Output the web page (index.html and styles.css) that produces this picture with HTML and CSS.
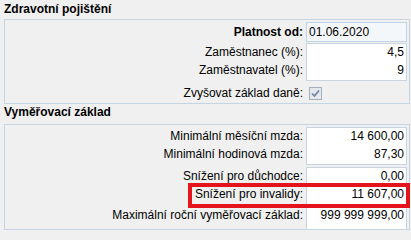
FILE: index.html
```html
<!DOCTYPE html>
<html lang="cs">
<head>
<meta charset="utf-8">
<title>Zdravotní pojištění</title>
<link rel="stylesheet" href="styles.css">
</head>
<body>
<div class="page">
  <section class="group g1">
    <div class="title">Zdravotní pojištění</div>
    <div class="box">
      <div class="row r-date">
        <span class="label strong">Platnost od:</span>
        <span class="val date">01.06.2020</span>
      </div>
      <div class="cluster">
        <div class="row first">
          <span class="label">Zaměstnanec (%):</span>
          <span class="val">4,5</span>
        </div>
        <div class="row last">
          <span class="label">Zaměstnavatel (%):</span>
          <span class="val">9</span>
        </div>
      </div>
      <div class="row r-check">
        <span class="label">Zvyšovat základ daně:</span>
        <span class="cell-check">
          <span class="check">
            <svg width="11" height="11" viewBox="0 0 11 11"><polyline points="2,5.5 4.4,8 9,2.5" fill="none" stroke="#6f84a4" stroke-width="1.7"/></svg>
          </span>
        </span>
      </div>
    </div>
  </section>

  <section class="group g2">
    <div class="title">Vyměřovací základ</div>
    <div class="box box2">
      <div class="cluster">
        <div class="row first">
          <span class="label">Minimální měsíční mzda:</span>
          <span class="val">14 600,00</span>
        </div>
        <div class="row last">
          <span class="label">Minimální hodinová mzda:</span>
          <span class="val">87,30</span>
        </div>
      </div>
      <div class="cluster c-b">
        <div class="row first">
          <span class="label">Snížení pro důchodce:</span>
          <span class="val">0,00</span>
        </div>
        <div class="row mid hl-row">
          <span class="label">Snížení pro invalidy:</span>
          <span class="val">11 607,00</span>
          <span class="highlight"></span>
        </div>
        <div class="row open">
          <span class="label">Maximální roční vyměřovací základ:</span>
          <span class="val">999 999 999,00</span>
        </div>
      </div>
    </div>
  </section>
</div>
</body>
</html>
```

FILE: styles.css
```css
html, body {
  margin: 0;
  padding: 0;
  background: #f0f0f0;
}

body {
  font-family: "Liberation Sans", Arial, sans-serif;
  font-size: 12px;
  color: #000;
}

.page {
  width: 406px;
  margin-left: 4px;
}

.title {
  font-weight: bold;
  line-height: 16px;
  height: 16px;
  white-space: nowrap;
}

.g1 .title {
  padding-top: 1px;
  margin-bottom: 2px;
}

.g2 .title {
  margin-bottom: 4px;
}

.box {
  border: 1px solid #c6d5e4;
  padding: 2px 2px 2px 0;
  display: flex;
  flex-direction: column;
}

.box2 {
  border-bottom: 1px solid #c6d5e4;
  padding-bottom: 0;
}

.row {
  display: flex;
  align-items: baseline;
  white-space: nowrap;
}

.label {
  flex: 1;
  text-align: right;
  padding-right: 3px;
  line-height: 16px;
}

.strong {
  font-weight: bold;
}

.val {
  box-sizing: border-box;
  width: 101px;
  background: #fff;
  border-left: 1px solid #c9d4e0;
  border-right: 1px solid #c9d4e0;
  text-align: right;
  padding-right: 2px;
  line-height: 16px;
  height: 18px;
}

.r-date .val {
  text-align: left;
  padding: 1px 0 0 2px;
  height: 20px;
  border: 1px solid #c0d3e6;
  background: #f4f7fa;
}

.r-date .label {
  line-height: 18px;
}

.cluster {
  margin-top: 1px;
}

.c-b {
  margin-top: 2px;
}

.box2 .cluster:first-child {
  margin-top: 0;
}

.row.first .val {
  border-top: 1px solid #c9d4e0;
  height: 19px;
}

.row.last .val {
  border-bottom: 1px solid #c9d4e0;
  height: 19px;
}

.row.open .val {
  height: 25px;
  padding-top: 3px;
}

.row.open .label {
  padding-top: 3px;
}

.r-check {
  margin-top: 4px;
  height: 16px;
}

.cell-check {
  width: 101px;
  align-self: flex-start;
}

.check {
  box-sizing: border-box;
  display: flex;
  align-items: center;
  justify-content: center;
  width: 13px;
  height: 13px;
  margin: 2px 0 0 3px;
  border: 1px solid #a4adba;
  background: #e4e7eb;
}

.hl-row {
  position: relative;
}

.highlight {
  position: absolute;
  left: 183px;
  top: -3px;
  width: 222px;
  height: 25px;
  box-sizing: border-box;
  border: 4px solid #e3141c;
}
```
